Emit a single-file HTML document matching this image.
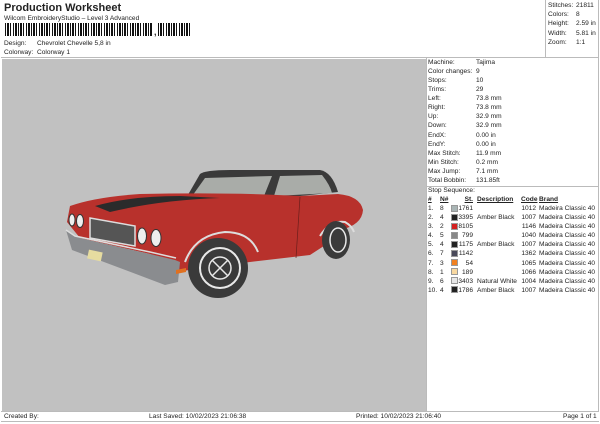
<!DOCTYPE html>
<html><head><meta charset="utf-8"><style>
*{margin:0;padding:0;box-sizing:border-box}
body{width:600px;height:424px;background:#fff;font-family:"Liberation Sans",Arial,sans-serif;font-size:6.6px;color:#222;position:relative;overflow:hidden}
.a{position:absolute;white-space:nowrap;line-height:9px}
.bar{position:absolute;height:13px;background:repeating-linear-gradient(90deg,#111 0 1px,#fff 1px 2px,#111 2px 4px,#fff 4px 5px,#111 5px 6px,#fff 6px 8px,#111 8px 9px,#fff 9px 10px,#111 10px 12px,#fff 12px 13px)}
.sw{position:absolute;width:7px;height:7px;border:1px solid #999}
</style></head><body>
<div class="a" style="left:4px;top:2px;font-size:11px;font-weight:bold;line-height:13px">Production Worksheet</div>
<div class="a" style="left:4px;top:14px">Wilcom EmbroideryStudio – Level 3 Advanced</div>
<div class="bar" style="left:5px;top:23px;width:148px"></div>
<div class="a" style="left:154px;top:28px;font-weight:bold;font-size:9px">,</div>
<div class="bar" style="left:158px;top:23px;width:34px"></div>
<div class="a" style="left:4px;top:39px">Design:</div><div class="a" style="left:37px;top:39px">Chevrolet Chevelle 5,8 in</div>
<div class="a" style="left:4px;top:48px">Colorway:</div><div class="a" style="left:37px;top:48px">Colorway 1</div>
<div style="position:absolute;left:1px;top:57px;width:598px;border-top:1px solid #bbb"></div>
<div style="position:absolute;left:545px;top:0;width:54px;height:57px;border-left:1px solid #bbb;border-right:1px solid #bbb"></div>
<div class="a" style="left:548px;top:1px;line-height:9.2px">Stitches:<br>Colors:<br>Height:<br>Width:<br>Zoom:</div>
<div class="a" style="left:576px;top:1px;line-height:9.2px">21811<br>8<br>2.59 in<br>5.81 in<br>1:1</div>
<div style="position:absolute;left:2px;top:59px;width:424px;height:352px;background:#c1c1c1"></div>
<svg style="position:absolute;left:0;top:0" width="600" height="424">
<path d="M200,174 Q205,170 230,170 L320,170 Q332,172 338,192 L300,196 L185,200 Z" fill="#3a3a3a"/>
<path d="M205,178 L272,176 L264,196 L190,199 Z" fill="#a9aca8"/>
<path d="M280,176 L322,175 Q330,185 332,193 L274,196 Z" fill="#a9aca8"/>
<path d="M70,206 Q95,197 140,194 Q230,192 300,196 L338,194 Q360,196 363,210 Q362,225 340,230 L330,242 L310,255 L250,262 L200,268 L178,272 L170,262 L150,254 L80,238 L67,222 Z" fill="#b8312c"/>
<path d="M95,206 Q130,196 180,196 L220,198 Q160,200 110,212 Z" fill="#2b2b2b"/>
<path d="M300,197 L296,258" stroke="#6b1e1b" stroke-width="0.7" fill="none"/>
<path d="M66,230 L80,238 L150,254 L175,260 L180,262 L178,282 L165,285 L120,268 L72,250 Z" fill="#8a8c8f"/>
<path d="M66,230 L75,236 L150,252 L176,258" stroke="#ddd" stroke-width="1.5" fill="none"/>
<path d="M90,218 L135,226 L135,246 L90,238 Z" fill="#555" stroke="#ddd" stroke-width="1.5"/>
<ellipse cx="72" cy="220" rx="3" ry="6" fill="#eee" stroke="#333"/>
<ellipse cx="80" cy="221" rx="3.5" ry="6.5" fill="#eee" stroke="#333"/>
<ellipse cx="142" cy="236" rx="4.5" ry="8" fill="#eee" stroke="#333"/>
<ellipse cx="156" cy="238" rx="5" ry="8.5" fill="#eee" stroke="#333"/>
<rect x="88" y="251" width="14" height="9" fill="#e6dca0" transform="rotate(12 95 255)"/>
<path d="M176,270 L186,268 L186,272 L176,274 Z" fill="#e07020"/>
<path d="M185,262 Q195,235 225,232 Q250,232 258,252" stroke="#ddd" stroke-width="2" fill="none"/>
<circle cx="218" cy="268" r="30" fill="#3a3a3a"/>
<circle cx="220" cy="268" r="20" fill="none" stroke="#e8e8e8" stroke-width="2"/>
<circle cx="220" cy="268" r="11" fill="none" stroke="#e8e8e8" stroke-width="1.5"/>
<path d="M212,260 L228,276 M228,260 L212,276" stroke="#e8e8e8" stroke-width="1.5"/>
<path d="M320,236 Q330,220 345,222 Q352,226 354,232" stroke="#ddd" stroke-width="2" fill="none"/>
<ellipse cx="336" cy="240" rx="14" ry="19" fill="#3a3a3a"/>
<ellipse cx="338" cy="240" rx="8" ry="12" fill="none" stroke="#e8e8e8" stroke-width="1.5"/>
</svg>
<div style="position:absolute;left:426px;top:58px;width:173px;height:353px;border-left:1px solid #bbb;border-right:1px solid #bbb"></div>
<div class="a" style="left:428px;top:58px;line-height:9.07px">Machine:<br>Color changes:<br>Stops:<br>Trims:<br>Left:<br>Right:<br>Up:<br>Down:<br>EndX:<br>EndY:<br>Max Stitch:<br>Min Stitch:<br>Max Jump:<br>Total Bobbin:</div>
<div class="a" style="left:476px;top:58px;line-height:9.07px">Tajima<br>9<br>10<br>29<br>73.8 mm<br>73.8 mm<br>32.9 mm<br>32.9 mm<br>0.00 in<br>0.00 in<br>11.9 mm<br>0.2 mm<br>7.1 mm<br>131.85ft</div>
<div style="position:absolute;left:427px;top:186px;width:171px;border-top:1px solid #bbb"></div>
<div class="a" style="left:428px;top:186px">Stop Sequence:</div>
<div class="a" style="left:428px;top:195px;font-weight:bold;text-decoration:underline">#</div>
<div class="a" style="left:440px;top:195px;font-weight:bold;text-decoration:underline">N#</div>
<div class="a" style="left:461px;top:195px;width:12px;text-align:right;font-weight:bold;text-decoration:underline">St.</div>
<div class="a" style="left:477px;top:195px;font-weight:bold;text-decoration:underline">Description</div>
<div class="a" style="left:521px;top:195px;font-weight:bold;text-decoration:underline">Code</div>
<div class="a" style="left:539px;top:195px;font-weight:bold;text-decoration:underline">Brand</div>
<div class="a" style="left:428px;top:204px;line-height:9.1px">1.<br>2.<br>3.<br>4.<br>5.<br>6.<br>7.<br>8.<br>9.<br>10.</div>
<div class="a" style="left:440px;top:204px;line-height:9.1px">8<br>4<br>2<br>5<br>4<br>7<br>3<br>1<br>6<br>4</div>
<div class="sw" style="left:451px;top:205px;background:#a9b5b5"></div>
<div class="sw" style="left:451px;top:214px;background:#222"></div>
<div class="sw" style="left:451px;top:223px;background:#d42020"></div>
<div class="sw" style="left:451px;top:232px;background:#888"></div>
<div class="sw" style="left:451px;top:241px;background:#222"></div>
<div class="sw" style="left:451px;top:250px;background:#4a4a5a"></div>
<div class="sw" style="left:451px;top:259px;background:#f08020"></div>
<div class="sw" style="left:451px;top:268px;background:#f8d8a0"></div>
<div class="sw" style="left:451px;top:277px;background:#e8e8e8"></div>
<div class="sw" style="left:451px;top:286px;background:#222"></div>
<div class="a" style="left:455px;top:204px;width:18px;text-align:right;line-height:9.1px">1761<br>3395<br>8105<br>799<br>1175<br>1142<br>54<br>189<br>3403<br>1786</div>
<div class="a" style="left:477px;top:204px;line-height:9.1px">&nbsp;<br>Amber Black<br>&nbsp;<br>&nbsp;<br>Amber Black<br>&nbsp;<br>&nbsp;<br>&nbsp;<br>Natural White<br>Amber Black</div>
<div class="a" style="left:518px;top:204px;width:18px;text-align:right;line-height:9.1px">1012<br>1007<br>1146<br>1040<br>1007<br>1362<br>1065<br>1066<br>1004<br>1007</div>
<div class="a" style="left:539px;top:204px;line-height:9.1px">Madeira Classic 40<br>Madeira Classic 40<br>Madeira Classic 40<br>Madeira Classic 40<br>Madeira Classic 40<br>Madeira Classic 40<br>Madeira Classic 40<br>Madeira Classic 40<br>Madeira Classic 40<br>Madeira Classic 40</div>
<div style="position:absolute;left:1px;top:411px;width:598px;border-top:1px solid #bbb"></div>
<div style="position:absolute;left:1px;top:421px;width:598px;border-top:1px solid #bbb"></div>
<div class="a" style="left:4px;top:412px">Created By:</div>
<div class="a" style="left:149px;top:412px">Last Saved: 10/02/2023 21:06:38</div>
<div class="a" style="left:356px;top:412px">Printed: 10/02/2023 21:06:40</div>
<div class="a" style="left:563px;top:412px">Page 1 of 1</div>
</body></html>
